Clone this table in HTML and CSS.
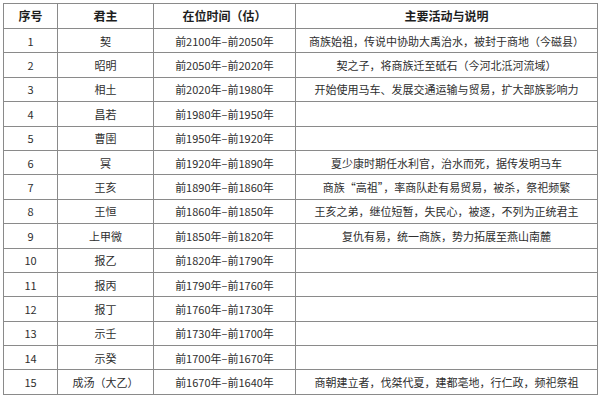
FILE: index.html
```html
<!DOCTYPE html>
<html lang="zh">
<head>
<meta charset="utf-8">
<link rel="stylesheet" href="styles.css">
</head>
<body>
<div class="page">
<table class="kings">
<colgroup><col class="c1"><col class="c2"><col class="c3"><col class="c4"></colgroup>
<thead>
<tr><th>序号</th><th>君主</th><th>在位时间（估）</th><th>主要活动与说明</th></tr>
</thead>
<tbody>
<tr><td>1</td><td>契</td><td>前2100年–前2050年</td><td>商族始祖，传说中协助大禹治水，被封于商地（今磁县）</td></tr>
<tr><td>2</td><td>昭明</td><td>前2050年–前2020年</td><td>契之子，将商族迁至砥石（今河北泜河流域）</td></tr>
<tr><td>3</td><td>相土</td><td>前2020年–前1980年</td><td>开始使用马车、发展交通运输与贸易，扩大部族影响力</td></tr>
<tr><td>4</td><td>昌若</td><td>前1980年–前1950年</td><td></td></tr>
<tr><td>5</td><td>曹圉</td><td>前1950年–前1920年</td><td></td></tr>
<tr><td>6</td><td>冥</td><td>前1920年–前1890年</td><td>夏少康时期任水利官，治水而死，据传发明马车</td></tr>
<tr><td>7</td><td>王亥</td><td>前1890年–前1860年</td><td>商族“高祖”，率商队赴有易贸易，被杀，祭祀频繁</td></tr>
<tr><td>8</td><td>王恒</td><td>前1860年–前1850年</td><td>王亥之弟，继位短暂，失民心，被逐，不列为正统君主</td></tr>
<tr><td>9</td><td>上甲微</td><td>前1850年–前1820年</td><td>复仇有易，统一商族，势力拓展至燕山南麓</td></tr>
<tr><td>10</td><td>报乙</td><td>前1820年–前1790年</td><td></td></tr>
<tr><td>11</td><td>报丙</td><td>前1790年–前1760年</td><td></td></tr>
<tr><td>12</td><td>报丁</td><td>前1760年–前1730年</td><td></td></tr>
<tr><td>13</td><td>示壬</td><td>前1730年–前1700年</td><td></td></tr>
<tr><td>14</td><td>示癸</td><td>前1700年–前1670年</td><td></td></tr>
<tr><td>15</td><td>成汤（大乙）</td><td>前1670年–前1640年</td><td>商朝建立者，伐桀代夏，建都亳地，行仁政，频祀祭祖</td></tr>
</tbody>
</table>
</div>
</body>
</html>
```

FILE: styles.css
```css
html, body {
  margin: 0;
  padding: 0;
  background: #ffffff;
}
.page {
  padding: 3px 0 0 3px;
}
.kings {
  border-collapse: collapse;
  table-layout: fixed;
  width: 594px;
  font-family: "Noto Sans CJK SC", "Noto Sans", sans-serif;
  color: #2e2e2e;
  font-size: 11px;
}
.c1 { width: 54px; }
.c2 { width: 96px; }
.c3 { width: 142px; }
.c4 { width: 302px; }
.kings th, .kings td {
  border: 1px solid #8a8a8a;
  text-align: center;
  vertical-align: middle;
  padding: 0;
  line-height: 14px;
  white-space: nowrap;
  overflow: hidden;
}
.kings th {
  font-weight: bold;
  font-size: 12px;
  color: #1e1e1e;
  height: 24px;
}
.kings td {
  height: 23.4px;
}
```
